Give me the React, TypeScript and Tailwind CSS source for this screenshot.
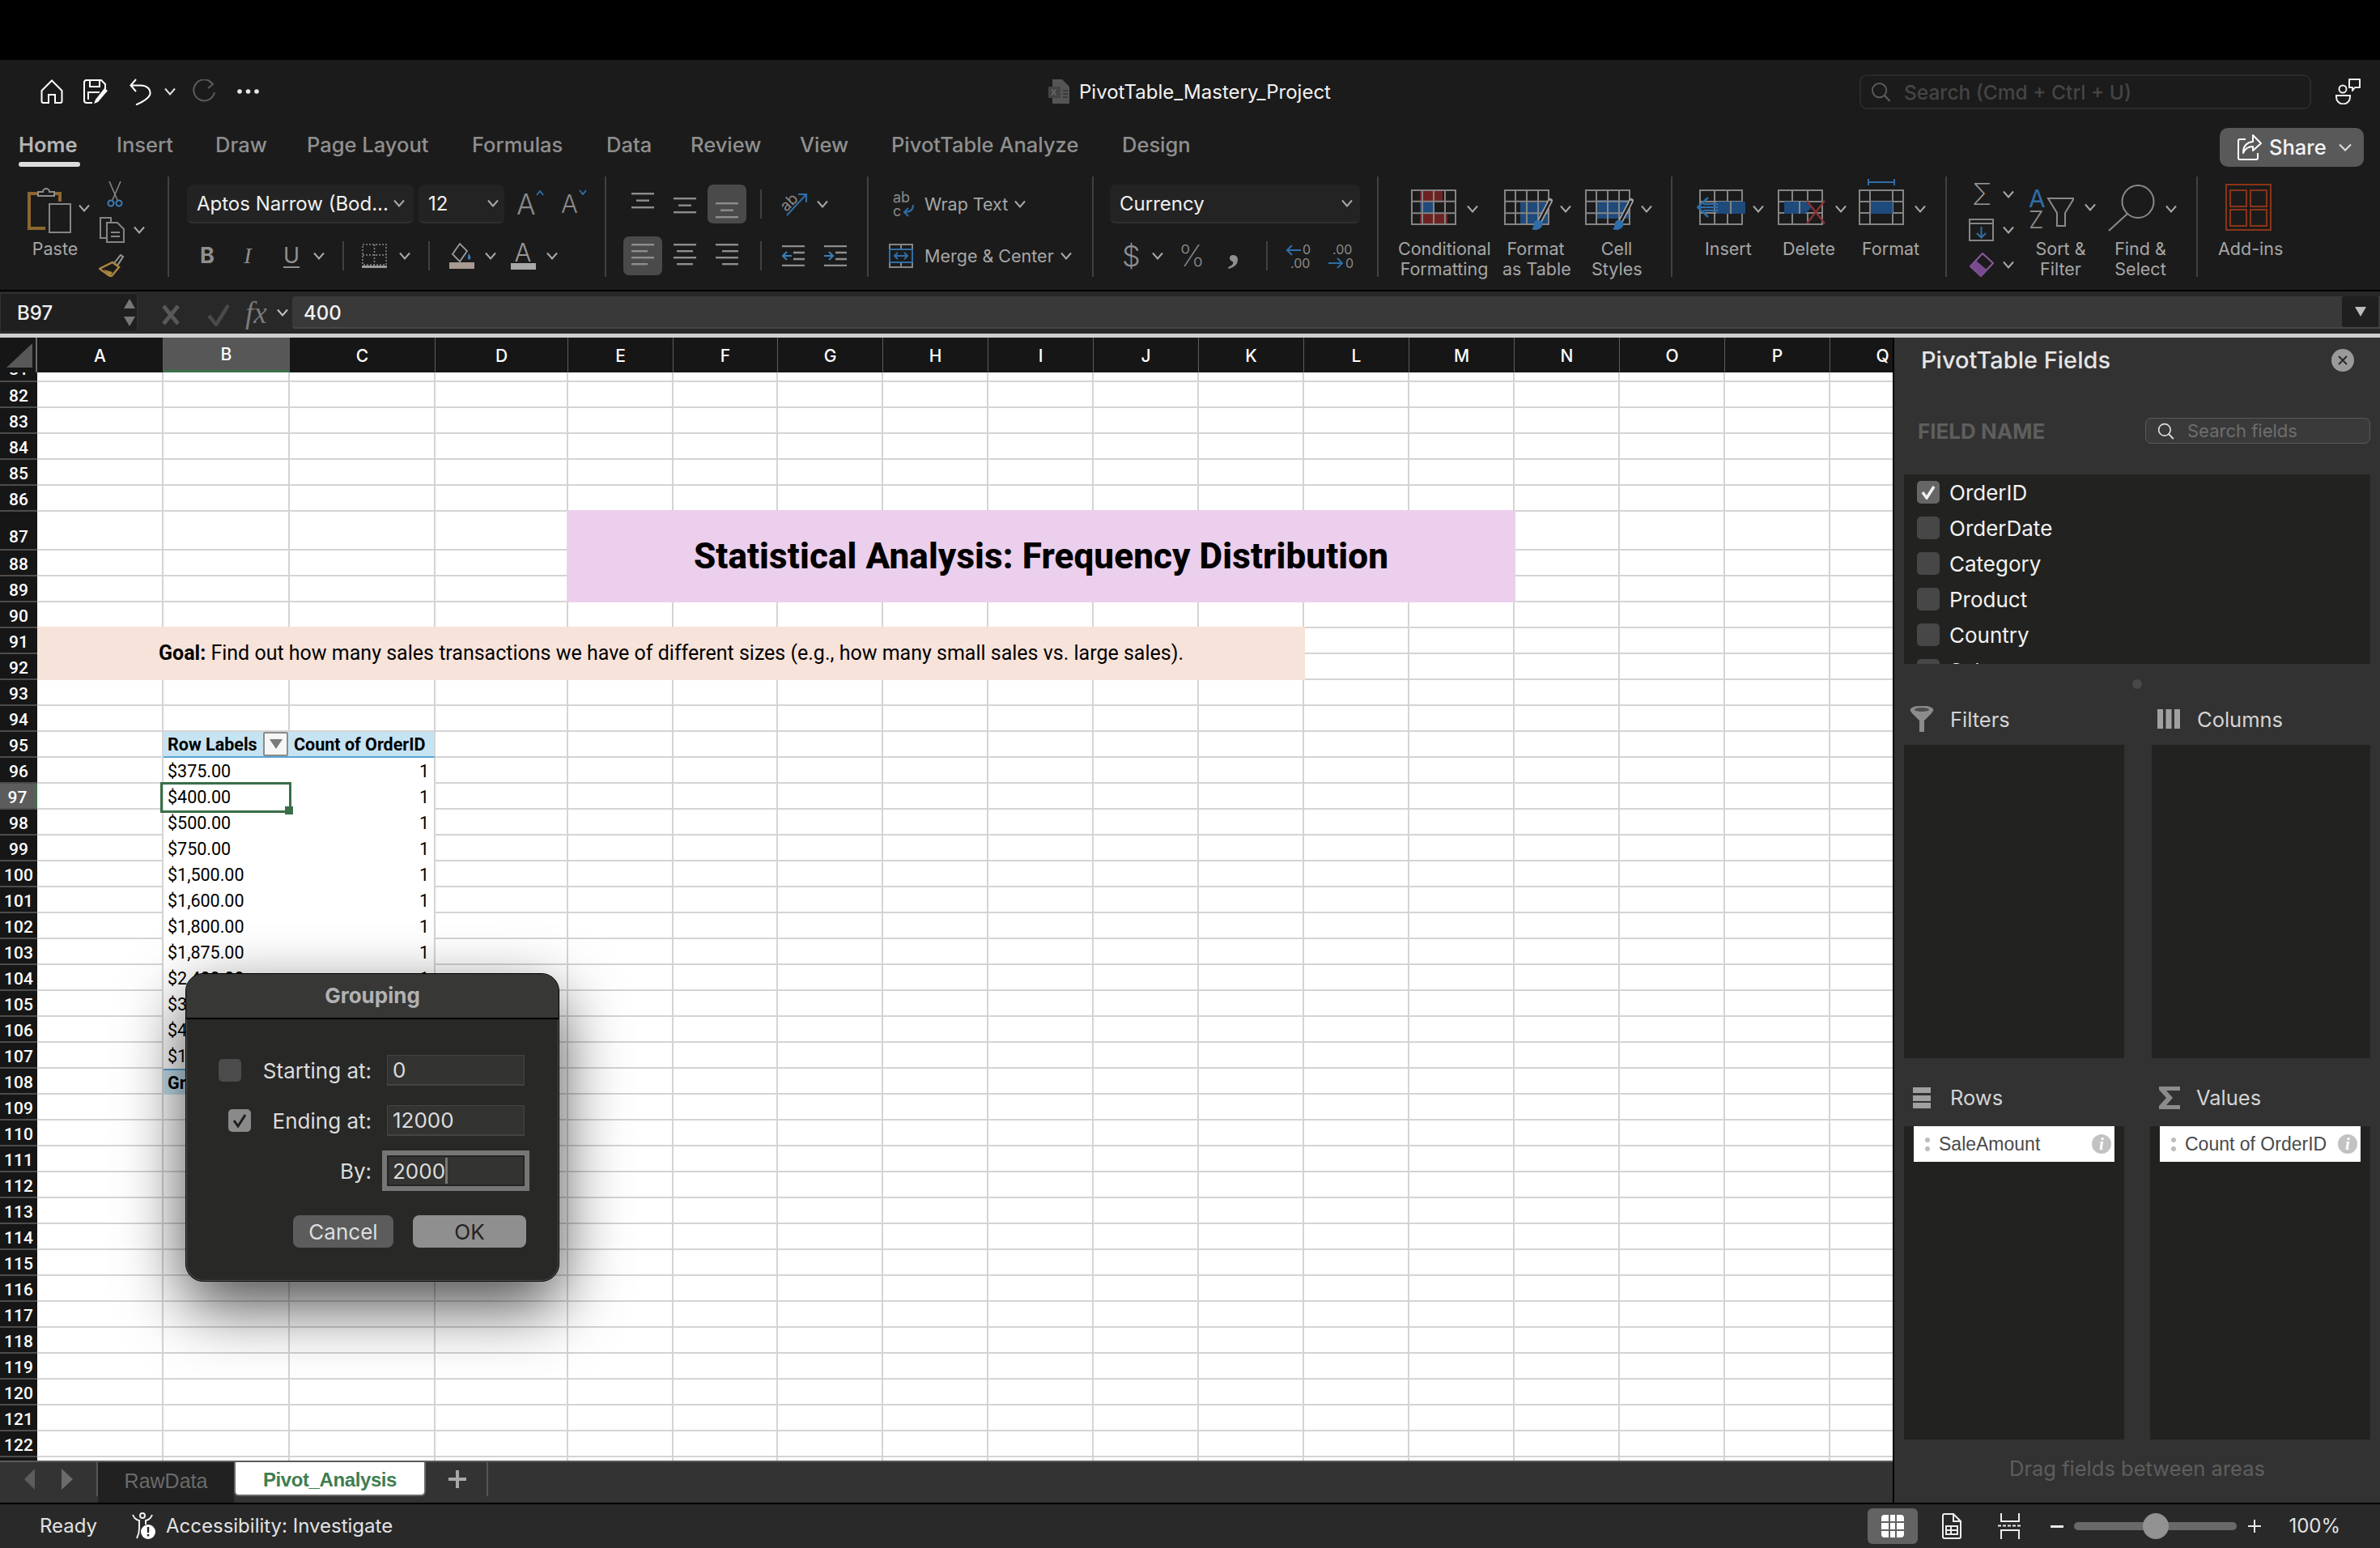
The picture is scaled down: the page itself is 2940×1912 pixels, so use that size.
import type { ReactNode } from 'react'

const columns = [
  { name: 'A', w: 'w-[156px]' }, { name: 'B', w: 'w-[156px]' }, { name: 'C', w: 'w-[180px]' },
  { name: 'D', w: 'w-[164px]' }, { name: 'E', w: 'w-[130px]' }, { name: 'F', w: 'w-[129px]' },
  { name: 'G', w: 'w-[130px]' }, { name: 'H', w: 'w-[130px]' }, { name: 'I', w: 'w-[130px]' },
  { name: 'J', w: 'w-[130px]' }, { name: 'K', w: 'w-[130px]' }, { name: 'L', w: 'w-[130px]' },
  { name: 'M', w: 'w-[130px]' }, { name: 'N', w: 'w-[130px]' }, { name: 'O', w: 'w-[130px]' },
  { name: 'P', w: 'w-[130px]' }, { name: 'Q', w: 'w-[130px]' },
]

const tabs = [
  { label: 'Home',              w: 'w-[121px]' },
  { label: 'Insert',            w: 'w-[122px]' },
  { label: 'Draw',              w: 'w-[113px]' },
  { label: 'Page Layout',       w: 'w-[204px]' },
  { label: 'Formulas',          w: 'w-[166px]' },
  { label: 'Data',              w: 'w-[104px]' },
  { label: 'Review',            w: 'w-[135px]' },
  { label: 'View',              w: 'w-[113px]' },
  { label: 'PivotTable Analyze', w: 'w-[285px]' },
  { label: 'Design',            w: 'w-[90px]' },
]

const pivotRows: Record<number, string> = {
  96: '$375.00', 97: '$400.00', 98: '$500.00', 99: '$750.00', 100: '$1,500.00', 101: '$1,600.00',
  102: '$1,800.00', 103: '$1,875.00', 104: '$2,400.00', 105: '$3,200.00', 106: '$4,500.00', 107: '$12,000.00',
}

const rowNumbers = Array.from({ length: 43 }, (_, i) => 81 + i)

function rowHeight(n: number) {
  if (n === 81) return 'items-end'
  if (n === 87) return 'items-end pb-[1px]'
  return 'items-center pt-[3px]'
}

function Chev({ className = '', color = '#a8a8a8' }: { className?: string; color?: string }) {
  return (
    <svg width="10" height="8" viewBox="0 0 10 8" className={`shrink-0 overflow-visible ${className}`}>
      <path d="M-1 0.500 5 7.500 11 0.500" fill="none" stroke={color} strokeWidth="2" />
    </svg>
  )
}

function VDiv({ className = '' }: { className?: string }) {
  return <div className={`h-[36px] w-[2px] shrink-0 bg-[#414141] ${className}`} />
}

function Magnifier({ size = 26, color = '#666' }: { size?: number; color?: string }) {
  return (
    <svg width={size} height={size} viewBox="0 0 26 26" className="shrink-0">
      <circle cx="11" cy="11" r="9" fill="none" stroke={color} strokeWidth="2" />
      <path d="M17.5 17.5 24.5 25" stroke={color} strokeWidth="2.4" />
    </svg>
  )
}

function LinesIcon({ rows, w = 28, pitch = 8.5, h }: { rows: [number, number][]; w?: number; pitch?: number; h?: number }) {
  return (
    <svg width={w} height={h ?? rows.length * pitch} viewBox={`0 0 ${w} ${h ?? rows.length * pitch}`} className="shrink-0">
      {rows.map(([x, len], i) => (
        <rect key={i} x={x} y={i * pitch + 1} width={len} height="2.4" fill="#8d8d8d" />
      ))}
    </svg>
  )
}

function Grid56({ children, overlay, w = 56, h = 44 }: { children?: ReactNode; overlay?: ReactNode; w?: number; h?: number }) {
  const cols = [w / 4, w / 2, (w * 3) / 4]
  const rows = [h / 3, (h * 2) / 3]
  return (
    <svg width={w + 12} height={h + 14} viewBox={`0 0 ${w + 12} ${h + 14}`} className="shrink-0 overflow-visible">
      {children}
      <rect x="1" y="1" width={w - 2} height={h - 2} fill="none" stroke="#858585" strokeWidth="2" />
      {cols.map(x => <path key={x} d={`M${x} 1V${h - 1}`} stroke="#858585" strokeWidth="2" />)}
      {rows.map(y => <path key={y} d={`M1 ${y}H${w - 1}`} stroke="#858585" strokeWidth="2" />)}
      {overlay}
    </svg>
  )
}

function Brush({ x, y }: { x: number; y: number }) {
  return (
    <g transform={`translate(${x} ${y})`}>
      <path d="M22 0 8 27" stroke="#a0a0a0" strokeWidth="6" strokeLinecap="round" />
      <path d="M22 0 8 27" stroke="#1b1b1b" strokeWidth="2.6" />
      <path d="M3 25c5-3 11 0 9 6-2 5-9 6-13 4 3-2 2-6 4-10z" fill="#2f6ea8" />
    </g>
  )
}

function Command({ className, width, iconClass, icon, chevClass, lines }: {
  className: string; width: string; iconClass: string; icon: ReactNode; chevClass: string; lines: string[]
}) {
  return (
    <div className={`flex shrink-0 flex-col pt-[16px] ${className} ${width}`}>
      <div className={`flex h-[61px] shrink-0 items-start ${iconClass}`}>
        <div className="shrink-0">{icon}</div>
        <Chev className={chevClass} />
      </div>
      {lines.map(line => (
        <div key={line} className="shrink-0 whitespace-nowrap text-center text-[21.5px] leading-[25px] text-[#a6a6a6]">{line}</div>
      ))}
    </div>
  )
}

function RibbonGroup({ width, className = '', children }: { width: string; className?: string; children: ReactNode }) {
  return <div className={`flex h-[124px] shrink-0 border-r-2 border-[#414141] ${width} ${className}`}>{children}</div>
}

function ToolRow({ children, className = '' }: { children: ReactNode; className?: string }) {
  return <div className={`flex h-[48px] shrink-0 items-center ${className}`}>{children}</div>
}

function Combo({ text, className, chevClass }: { text: string; className: string; chevClass: string }) {
  return (
    <div className={`flex h-[48px] shrink-0 items-center rounded-[7px] border-b-2 border-[#303030] bg-[#232323] pl-[12px] ${className}`}>
      <span className="whitespace-nowrap pt-[2px] text-[24px] text-[#f0f0f0]">{text}</span>
      <Chev className={chevClass} />
    </div>
  )
}

function QuickAccess() {
  return (
    <div className="flex h-[78px] items-center">
      <svg width="28" height="30" viewBox="0 0 28 30" className="ml-[50px] shrink-0">
        <path d="M14 1.5 26.5 14v13a2 2 0 0 1-2 2H18V19h-8v10H3.500a2 2 0 0 1-2-2V14z" fill="none" stroke="#fff" strokeWidth="2" />
      </svg>
      <svg width="31" height="30" viewBox="0 0 31 30" className="ml-[25px] shrink-0">
        <path d="M11 29H4a3 3 0 0 1-3-3V4a3 3 0 0 1 3-3h18l5 5v6" fill="none" stroke="#fff" strokeWidth="2" />
        <path d="M8 1v8h12V1M6 25v-9h14" fill="none" stroke="#fff" strokeWidth="2" />
        <path d="M26 11 15 25l-2 5 5-2 12-14z" fill="#fff" />
      </svg>
      <svg width="27" height="33" viewBox="0 0 27 33" className="ml-[26px] shrink-0">
        <path d="M8 1 1.500 8.500 8 16M1.500 8.500H13c10 0 14 6 12 12-2 4-8 8-17 12" fill="none" stroke="#fff" strokeWidth="2" />
      </svg>
      <Chev className="ml-[18px]" color="#e0e0e0" />
      <svg width="29" height="30" viewBox="0 0 29 30" className="ml-[22px] shrink-0">
        <path d="M26 6a13 13 0 1 0 2 10M20 1l6 5-6 5" fill="none" stroke="#5a5a5a" strokeWidth="2" />
      </svg>
      <svg width="27" height="6" viewBox="0 0 27 6" className="ml-[27px] shrink-0">
        <circle cx="3" cy="3" r="2.800" fill="#e8e8e8" /><circle cx="13.500" cy="3" r="2.800" fill="#e8e8e8" /><circle cx="24" cy="3" r="2.800" fill="#e8e8e8" />
      </svg>
      <svg width="26" height="30" viewBox="0 0 26 30" className="ml-[975px] shrink-0">
        <path d="M5 0h12l9 9v21H5z" fill="#555" />
        <rect x="0" y="9" width="15" height="14" rx="1" fill="#444" />
        <text x="3" y="20" fontSize="11" fill="#777">X</text>
        <path d="M18 14h6M18 18h6M18 22h6" stroke="#333" strokeWidth="1.500" />
      </svg>
      <span className="ml-[12px] w-[312px] whitespace-nowrap pt-[2px] text-[24px] text-[#f2f2f2]">PivotTable_Mastery_Project</span>
      <div className="ml-[652px] flex h-[43px] w-[558px] shrink-0 items-center rounded-[9px] border-2 border-[#2a2a2a] pl-[12px]">
        <Magnifier size={25} color="#5a5a5a" />
        <span className="ml-[16px] whitespace-nowrap pt-[2px] text-[24.500px] font-medium text-[#454545]">Search (Cmd + Ctrl + U)</span>
      </div>
      <svg width="32" height="32" viewBox="0 0 32 32" className="ml-[30px] shrink-0">
        <path d="M17 1h13v10h-6l-3 4v-4h-4z" fill="none" stroke="#eee" strokeWidth="2" strokeLinejoin="round" />
        <circle cx="9" cy="13" r="4.500" fill="none" stroke="#eee" strokeWidth="2" />
        <path d="M1 21h17v2a8.500 8.500 0 0 1-17 0z" fill="none" stroke="#eee" strokeWidth="2" />
      </svg>
    </div>
  )
}

function RibbonTabs() {
  return (
    <div className="flex h-[60px] items-start pl-[23px]">
      {tabs.map(tab => (
        <div key={tab.label} className={`flex shrink-0 flex-col pt-[12px] ${tab.w}`}>
          <span className={`whitespace-nowrap text-[25.500px] leading-[30px] ${tab.label === 'Home' ? 'font-semibold text-[#b4b4b4]' : 'font-medium text-[#8f8f8f]'}`}>{tab.label}</span>
          {tab.label === 'Home' && <div className="mt-[6px] h-[6px] w-[76px] rounded-full bg-[#dcdcdc]" />}
        </div>
      ))}
      <div className="ml-auto mr-[20px] mt-[6px] flex h-[48px] w-[178px] items-center rounded-[10px] bg-[#595959] pl-[22px]">
        <svg width="30" height="32" viewBox="0 0 30 32" className="shrink-0">
          <path d="M10 6H3a2 2 0 0 0-2 2v21a2 2 0 0 0 2 2h20a2 2 0 0 0 2-2v-6" fill="none" stroke="#fff" strokeWidth="2" />
          <path d="M19 1l10 10-10 9v-5c-6 0-10 3-12 8 0-8 4-13 12-14z" fill="none" stroke="#fff" strokeWidth="2" strokeLinejoin="round" />
        </svg>
        <span className="ml-[9px] text-[25.500px] font-medium text-[#f4f4f4]">Share</span>
        <svg width="16" height="10" viewBox="0 0 16 10" className="ml-[15px] shrink-0">
          <path d="M1 1.500 8 8.500 15 1.500" fill="none" stroke="#e0e0e0" strokeWidth="2" />
        </svg>
      </div>
    </div>
  )
}

function Ribbon() {
  return (
    <div className="flex h-[146px] pt-[6px]">
      <RibbonGroup width="w-[209px]">
        <div className="w-[122px] shrink-0 pt-[10px]">
          <div className="ml-[34px] flex items-center">
            <svg width="54" height="60" viewBox="0 0 54 60" className="shrink-0">
              <path d="M22 54H2V11h38v10" fill="none" stroke="#8c672f" strokeWidth="4" />
              <path d="M13 14V9h6a4 4 0 0 1 8 0h6v5z" fill="#1b1b1b" stroke="#8d8d8d" strokeWidth="2" />
              <rect x="27" y="24" width="26" height="35" fill="#1b1b1b" stroke="#858585" strokeWidth="2" />
            </svg>
            <Chev className="ml-[11px] mt-[-2px]" />
          </div>
          <div className="mt-[6px] w-[136px] text-center text-[21.500px] leading-[26px] text-[#a6a6a6]">Paste</div>
        </div>
        <div className="flex flex-col pt-[6px]">
          <svg width="20" height="32" viewBox="0 0 20 32" className="ml-[10px] shrink-0">
            <path d="M3 0 13 23M17 0 7 23" stroke="#8a8a8a" strokeWidth="1.500" />
            <circle cx="5" cy="27" r="3.500" fill="none" stroke="#3a7fb8" strokeWidth="2" />
            <circle cx="15" cy="27" r="3.500" fill="none" stroke="#3a7fb8" strokeWidth="2" />
          </svg>
          <div className="mt-[12px] flex items-center">
            <svg width="32" height="32" viewBox="0 0 32 32" className="shrink-0">
              <path d="M12 26H2V1h13v6" fill="none" stroke="#858585" strokeWidth="2" />
              <path d="M10 7h13l8 8v16H10z" fill="#1b1b1b" stroke="#858585" strokeWidth="2" />
              <path d="M15 19h11M15 24h11" stroke="#858585" strokeWidth="2" />
            </svg>
            <Chev className="ml-[13px]" />
          </div>
          <svg width="32" height="30" viewBox="0 0 32 30" className="mt-[12px] shrink-0">
            <path d="M19 13 27 3l3 2-7 11z" fill="none" stroke="#9a9a9a" strokeWidth="2" />
            <path d="M17 12 25 18 15 30 1 20z" fill="none" stroke="#a9843f" strokeWidth="2.500" />
            <path d="M6 21 17 24 14 30z" fill="#a9843f" />
          </svg>
        </div>
      </RibbonGroup>

      <RibbonGroup width="w-[540px]" className="flex-col gap-[16px] pt-[10px]">
        <ToolRow>
          <Combo text="Aptos Narrow (Bod..." className="ml-[22px] w-[280px]" chevClass="ml-[8px]" />
          <Combo text="12" className="ml-[6px] w-[106px]" chevClass="ml-[51px]" />
          <div className="relative ml-[15px] h-[34px] w-[30px] shrink-0 text-[35px] leading-[34px] font-light text-[#8a8a8a]">A
            <svg width="10" height="7" viewBox="0 0 10 7" className="absolute right-[-4px] top-[0px]"><path d="M1 6 5 1l4 5" fill="none" stroke="#2f6ea8" strokeWidth="2" /></svg>
          </div>
          <div className="relative ml-[25px] h-[30px] w-[27px] shrink-0 text-[31px] leading-[30px] font-light text-[#8a8a8a]">A
            <svg width="10" height="7" viewBox="0 0 10 7" className="absolute right-[-5px] top-[-3px]"><path d="M1 1l4 5 4-5" fill="none" stroke="#2f6ea8" strokeWidth="2" /></svg>
          </div>
        </ToolRow>
        <ToolRow>
          <span className="ml-[38px] w-[15px] text-center text-[27px] font-bold text-[#8f8f8f]">B</span>
          <span className="ml-[38px] w-[12px] text-center font-['Liberation_Serif',serif] text-[28px] italic text-[#8f8f8f]">I</span>
          <span className="ml-[38px] w-[15px] text-center text-[27px] text-[#8f8f8f] underline underline-offset-4">U</span>
          <Chev className="ml-[24px]" />
          <VDiv className="ml-[24px]" />
          <svg width="31" height="30" viewBox="0 0 31 30" className="ml-[22px] shrink-0">
            <rect x="1" y="1" width="29" height="25" fill="none" stroke="#8a8a8a" strokeWidth="1.500" strokeDasharray="2 2" />
            <path d="M15.500 1v25M1 14h29" stroke="#8a8a8a" strokeWidth="1.500" strokeDasharray="2 2" />
            <rect x="0" y="27" width="31" height="3" fill="#9a9a9a" />
          </svg>
          <Chev className="ml-[17px]" />
          <VDiv className="ml-[24px]" />
          <svg width="31" height="32" viewBox="0 0 31 32" className="ml-[24px] shrink-0">
            <path d="M13 1 4 14l9 9 9-13z" fill="none" stroke="#9a9a9a" strokeWidth="1.800" />
            <path d="M24 13c2 3 3 5 2 7-1 1-3 1-3-1 0-2 0-4 1-6z" fill="#3a7fb8" />
            <rect x="0" y="24" width="31" height="8" fill="#a89a90" />
          </svg>
          <Chev className="ml-[15px]" />
          <div className="ml-[19px] flex w-[32px] shrink-0 flex-col items-center">
            <span className="text-[31px] leading-[24px] font-light text-[#9a9a9a]">A</span>
            <div className="mt-[1px] h-[8px] w-[31px] bg-[#a8a8a8]" />
          </div>
          <Chev className="ml-[15px]" />
        </ToolRow>
      </RibbonGroup>

      <RibbonGroup width="w-[324px]" className="flex-col gap-[16px] pt-[10px]">
        <ToolRow>
          <div className="ml-[31px] h-[48px] w-[28px] shrink-0 pt-[9px]"><LinesIcon rows={[[0, 28], [6, 16], [0, 28]]} /></div>
          <div className="ml-[24px] h-[48px] w-[28px] shrink-0 pt-[15px]"><LinesIcon rows={[[0, 28], [6, 16], [0, 28]]} /></div>
          <div className="ml-[14px] flex h-[48px] w-[48px] shrink-0 justify-center rounded-[7px] bg-[#4a4a4a] pt-[21px]"><LinesIcon rows={[[0, 28], [6, 16], [0, 28]]} /></div>
          <VDiv className="ml-[17px]" />
          <svg width="34" height="30" viewBox="0 0 34 30" className="ml-[23px] shrink-0">
            <text x="0" y="20" fontSize="19" fill="#8a8a8a" transform="rotate(-45 10 14)">ab</text>
            <path d="M8 29 31 4M22 3h10v10" fill="none" stroke="#2f6ea8" strokeWidth="2" />
          </svg>
          <Chev className="ml-[13px]" />
        </ToolRow>
        <ToolRow>
          <div className="ml-[21px] flex h-[48px] w-[48px] shrink-0 items-center justify-center rounded-[7px] bg-[#4a4a4a]"><LinesIcon rows={[[0, 28], [0, 20], [0, 28], [0, 20]]} pitch={8} /></div>
          <div className="ml-[14px] w-[28px] shrink-0"><LinesIcon rows={[[0, 28], [4, 20], [0, 28], [4, 20]]} pitch={8} /></div>
          <div className="ml-[24px] w-[28px] shrink-0"><LinesIcon rows={[[0, 28], [8, 20], [0, 28], [8, 20]]} pitch={8} /></div>
          <VDiv className="ml-[27px]" />
          <svg width="28" height="26" viewBox="0 0 28 26" className="ml-[25px] shrink-0">
            <path d="M0 1h28M14 9h14M14 17h14M0 25h28" stroke="#8d8d8d" strokeWidth="2.400" />
            <path d="M12 13H1M6 8l-5 5 5 5" fill="none" stroke="#3a7fb8" strokeWidth="2" />
          </svg>
          <svg width="28" height="26" viewBox="0 0 28 26" className="ml-[24px] shrink-0">
            <path d="M0 1h28M14 9h14M14 17h14M0 25h28" stroke="#8d8d8d" strokeWidth="2.400" />
            <path d="M0 13h11M6 8l5 5-5 5" fill="none" stroke="#3a7fb8" strokeWidth="2" />
          </svg>
        </ToolRow>
      </RibbonGroup>

      <RibbonGroup width="w-[278px]" className="flex-col gap-[16px] pt-[10px]">
        <ToolRow>
          <svg width="27" height="32" viewBox="0 0 27 32" className="ml-[30px] shrink-0">
            <text x="0" y="14" fontSize="18" fill="#8a8a8a">ab</text>
            <text x="0" y="31" fontSize="18" fill="#8a8a8a">c</text>
            <path d="M25 17c0 6-3 9-10 9M19 21l-5 5 5 5" fill="none" stroke="#2f6ea8" strokeWidth="2" />
          </svg>
          <span className="ml-[12px] w-[101px] whitespace-nowrap text-[21.500px] text-[#a6a6a6]">Wrap Text</span>
          <Chev className="ml-[12px]" />
        </ToolRow>
        <ToolRow>
          <svg width="30" height="30" viewBox="0 0 30 30" className="ml-[25px] shrink-0">
            <path d="M1 1h28v28H1zM1 7h28M1 23h28M15 1v6M15 23v6" fill="none" stroke="#858585" strokeWidth="2" />
            <path d="M1 7v16M29 7v16M1 7h28M1 23h28" fill="none" stroke="#2f6ea8" strokeWidth="2" />
            <path d="M7 15h16M11 11l-4 4 4 4M19 11l4 4-4 4" fill="none" stroke="#2f6ea8" strokeWidth="2" />
          </svg>
          <span className="ml-[14px] w-[158px] whitespace-nowrap text-[21.500px] text-[#a6a6a6]">Merge &amp; Center</span>
          <Chev className="ml-[12px]" />
        </ToolRow>
      </RibbonGroup>

      <RibbonGroup width="w-[352px]" className="flex-col gap-[16px] pt-[10px]">
        <ToolRow>
          <Combo text="Currency" className="ml-[20px] w-[309px]" chevClass="ml-[171px]" />
        </ToolRow>
        <ToolRow>
          <span className="ml-[35px] w-[16px] text-center text-[36px] font-light leading-[44px] text-[#8f8f8f]">$</span>
          <Chev className="ml-[23px]" />
          <span className="ml-[21px] w-[30px] text-center text-[36px] font-extralight leading-[44px] text-[#8f8f8f]">%</span>
          <span className="ml-[30px] mt-[-24px] w-[16px] text-center font-['Liberation_Serif',serif] text-[58px] font-bold leading-[24px] text-[#8f8f8f]">,</span>
          <VDiv className="ml-[32px]" />
          <svg width="31" height="32" viewBox="0 0 31 32" className="ml-[23px] shrink-0">
            <text x="20" y="14" fontSize="16" fill="#8a8a8a">0</text>
            <text x="5" y="31" fontSize="16" fill="#8a8a8a">.00</text>
            <path d="M18 9H2M7 3 1 9l6 6" fill="none" stroke="#2f6ea8" strokeWidth="2" />
          </svg>
          <svg width="32" height="32" viewBox="0 0 32 32" className="ml-[20px] shrink-0">
            <text x="6" y="14" fontSize="16" fill="#8a8a8a">.00</text>
            <text x="22" y="31" fontSize="16" fill="#8a8a8a">0</text>
            <path d="M1 25h16M12 19l6 6-6 6" fill="none" stroke="#2f6ea8" strokeWidth="2" />
          </svg>
        </ToolRow>
      </RibbonGroup>

      <RibbonGroup width="w-[363px]">
        <Command className="ml-[24px]" width="w-[114px]" iconClass="ml-[16px]" chevClass="ml-[3px] mt-[20px]" lines={['Conditional', 'Formatting']} icon={
          <Grid56>
            <rect x="11" y="1" width="28" height="15" fill="#6d2222" />
            <rect x="11" y="16" width="18" height="14" fill="#1f4a7c" />
            <rect x="11" y="30" width="34" height="14" fill="#6d2222" />
          </Grid56>
        } />
        <Command className="ml-[15px]" width="w-[82px]" iconClass="ml-[2px]" chevClass="ml-[3px] mt-[20px]" lines={['Format', 'as Table']} icon={
          <Grid56 overlay={<Brush x={35} y={14} />}>
            <rect x="20" y="16" width="36" height="28" fill="#1f4a7c" />
          </Grid56>
        } />
        <Command className="ml-[28px]" width="w-[62px]" iconClass="ml-[-8px]" chevClass="ml-[3px] mt-[20px]" lines={['Cell', 'Styles']} icon={
          <Grid56 overlay={<Brush x={35} y={14} />}>
            <rect x="13" y="13" width="43" height="23" fill="#1f4a7c" />
          </Grid56>
        } />
      </RibbonGroup>

      <RibbonGroup width="w-[339px]">
        <Command className="ml-[40px]" width="w-[57px]" iconClass="ml-[-10px]" chevClass="ml-[-1px] mt-[20px]" lines={['Insert']} icon={
          <svg width="72" height="44" viewBox="0 0 72 44" className="shrink-0">
            <path d="M4 1h52v42H4zM4 15h52M4 29h52M22 1v42M38 1v42" fill="none" stroke="#858585" strokeWidth="2" />
            <rect x="24" y="15" width="36" height="15" fill="#1f4a7c" /><path d="M42 15v15" stroke="#858585" strokeWidth="2" />
            <path d="M26 22H2M14 10 1 22l13 12M26 18H8M26 26H8" fill="none" stroke="#2f6ea8" strokeWidth="2.500" />
          </svg>
        } />
        <Command className="ml-[39px]" width="w-[64px]" iconClass="ml-[-6px]" chevClass="ml-[1px] mt-[20px]" lines={['Delete']} icon={
          <svg width="72" height="44" viewBox="0 0 72 44" className="shrink-0">
            <path d="M1 1h54v42H1zM1 15h54M1 29h54M18 1v14M18 29v14M37 1v14M37 29v14" fill="none" stroke="#858585" strokeWidth="2" />
            <path d="M8 15h26l8 7-8 8H8z" fill="#1f4a7c" /><path d="M27 15v15" stroke="#858585" strokeWidth="2" />
            <path d="M36 14 58 42M58 14 36 42" stroke="#8c3232" strokeWidth="2.400" />
          </svg>
        } />
        <Command className="ml-[34px]" width="w-[70px]" iconClass="ml-[-4px]" chevClass="ml-[15px] mt-[20px]" lines={['Format']} icon={
          <svg width="56" height="44" viewBox="0 0 56 44" className="shrink-0 overflow-visible">
            <path d="M12 -9h32M12 -13v8M44 -13v8" stroke="#2f6ea8" strokeWidth="2" />
            <path d="M1 1h54v42H1zM1 15h54M1 29h54M14 1v42M42 1v42" fill="none" stroke="#858585" strokeWidth="2" />
            <rect x="15" y="15" width="27" height="15" fill="#1f4a7c" />
          </svg>
        } />
      </RibbonGroup>

      <RibbonGroup width="w-[310px]">
        <div className="ml-[27px] flex w-[54px] shrink-0 flex-col">
          <div className="mt-[8px] flex h-[28px] items-center">
            <span className="ml-[4px] w-[24px] text-center text-[36px] font-extralight leading-[28px] text-[#9a9a9a]">Σ</span>
            <Chev className="ml-[16px]" />
          </div>
          <div className="mt-[16px] flex h-[28px] items-center">
            <svg width="31" height="28" viewBox="0 0 31 28" className="shrink-0">
              <path d="M1 1h29v26H1zM1 6h29" fill="none" stroke="#858585" strokeWidth="2" />
              <path d="M15.500 10v13M10 18l5.500 5.500L21 18" fill="none" stroke="#2f6ea8" strokeWidth="2" />
            </svg>
            <Chev className="ml-[13px]" />
          </div>
          <div className="mt-[14px] flex h-[30px] items-center">
            <svg width="31" height="30" viewBox="0 0 31 30" className="shrink-0">
              <path d="M17 1 30 13 15 29 2 17z" fill="none" stroke="#8a5aa0" strokeWidth="2" />
              <path d="M9 10 22 21 15 29 2 17z" fill="#7a4a90" />
            </svg>
            <Chev className="ml-[13px]" />
          </div>
        </div>
        <Command className="ml-[28px]" width="w-[63px]" iconClass="ml-[-8px] mt-[-4px] mb-[4px]" chevClass="ml-[15px] mt-[22px]" lines={['Sort &', 'Filter']} icon={
          <svg width="56" height="52" viewBox="0 0 56 52" className="shrink-0">
            <text x="0" y="26" fontSize="30" fill="#2f6ea8">A</text>
            <text x="0" y="52" fontSize="30" fontWeight="300" fill="#8a8a8a">Z</text>
            <path d="M24 15h32L45 33v16h-10V33z" fill="none" stroke="#8a8a8a" strokeWidth="2" />
          </svg>
        } />
        <Command className="ml-[35px]" width="w-[64px]" iconClass="ml-[-8px] mt-[-6px] mb-[6px]" chevClass="ml-[15px] mt-[26px]" lines={['Find &', 'Select']} icon={
          <svg width="58" height="58" viewBox="0 0 58 58" className="shrink-0">
            <ellipse cx="37" cy="21" rx="19.500" ry="20" fill="none" stroke="#8a8a8a" strokeWidth="2" />
            <path d="M24 37 1 58" stroke="#8a8a8a" strokeWidth="2" transform="translate(0 -1)" />
          </svg>
        } />
      </RibbonGroup>

      <div className="flex flex-col">
        <div className="ml-[25px] flex w-[78px] flex-col pt-[9px]">
          <svg width="57" height="58" viewBox="0 0 57 58" className="ml-[9px] shrink-0">
            <rect x="1" y="1" width="55" height="56" fill="none" stroke="#8a3418" strokeWidth="2" />
            <rect x="6" y="8" width="20" height="20" fill="none" stroke="#8a3418" strokeWidth="2" />
            <rect x="31" y="8" width="20" height="20" fill="none" stroke="#8a3418" strokeWidth="2" />
            <rect x="6" y="32" width="20" height="20" fill="none" stroke="#8a3418" strokeWidth="2" />
            <rect x="31" y="32" width="20" height="20" fill="none" stroke="#8a3418" strokeWidth="2" />
          </svg>
          <div className="mt-[10px] whitespace-nowrap text-center text-[21.500px] leading-[25px] text-[#a6a6a6]">Add-ins</div>
        </div>
      </div>
    </div>
  )
}

function FormulaBar() {
  return (
    <div className="flex h-[52px] items-center bg-[#282828]">
      <div className="flex h-[48px] w-[170px] shrink-0 items-center border border-[#303030] bg-[#1f1f1f] pl-[20px]">
        <span className="w-[44px] pt-[2px] text-[24px] font-medium text-[#f0f0f0]">B97</span>
        <div className="ml-[88px] flex flex-col gap-[10px]">
          <svg width="14" height="12" viewBox="0 0 14 12"><path d="M7 0 14 12H0z" fill="#777" /></svg>
          <svg width="14" height="12" viewBox="0 0 14 12"><path d="M7 12 14 0H0z" fill="#777" /></svg>
        </div>
      </div>
      <svg width="22" height="26" viewBox="0 0 22 26" className="ml-[30px] mt-[6px] shrink-0">
        <path d="M2 2 20 24M20 2 2 24" stroke="#585858" strokeWidth="5" />
      </svg>
      <svg width="28" height="28" viewBox="0 0 28 28" className="ml-[34px] mt-[6px] shrink-0">
        <path d="M2 15 11 26 26 2" fill="none" stroke="#4a4a4a" strokeWidth="4.500" />
      </svg>
      <span className="ml-[19px] w-[32px] shrink-0 font-['Liberation_Serif',serif] text-[37px] italic leading-none text-[#7a7a7a]">fx</span>
      <Chev className="ml-[9px]" color="#c0c0c0" />
      <div className="ml-[7px] flex h-[40px] flex-1 items-center justify-between rounded-l-[4px] border-b-2 border-[#454545] bg-[#393939] pl-[14px]">
        <span className="pt-[3px] text-[24px] font-medium text-[#f2f2f2]">400</span>
        <div className="mr-[2px] flex h-[38px] w-[45px] items-center justify-center rounded-[3px] bg-[#1f1f1f]">
          <svg width="14" height="12" viewBox="0 0 14 12"><path d="M7 12 14 0H0z" fill="#bdbdbd" /></svg>
        </div>
      </div>
    </div>
  )
}

function Sheet() {
  return (
    <div className="relative h-[1387px] overflow-hidden bg-white font-['Roboto',sans-serif]">
      <div className="flex h-[43px] bg-[#161616]">
        <div className="flex w-[46px] shrink-0 items-center justify-center border-r-2 border-[#6a6a6a] pl-[4px]">
          <svg width="32" height="30" viewBox="0 0 32 30"><path d="M32 0V30H0z" fill="#585858" /></svg>
        </div>
        {columns.map(col => (
          <div key={col.name} className={`flex shrink-0 items-center justify-center border-r border-[#5c5c5c] pt-[2px] font-['Inter',sans-serif] text-[21px] font-medium text-white ${col.w} ${col.name === 'B' ? 'border-b-[3px] border-b-[#3a7049] bg-[#575757]' : ''}`}>
            {col.name}
          </div>
        ))}
      </div>

      {rowNumbers.map(n => {
        const label = n === 95 ? 'Row Labels' : n === 108 ? 'Grand Total' : pivotRows[n]
        const pivot = n >= 95 && n <= 108
        const banded = n === 95 || n === 108
        return (
          <div key={n} className={`flex ${n === 81 ? 'h-[12px]' : n === 87 ? 'h-[48px]' : 'h-[32px]'}`}>
            <div className={`flex w-[46px] shrink-0 justify-center overflow-hidden border-b-2 border-[#4c4c4c] text-[21px] font-medium leading-[28px] text-white ${rowHeight(n)} ${n === 97 ? 'border-r-[3px] border-r-[#3a7049] bg-[#5c5c5c]' : 'bg-[#161616]'}`}>
              {n}
            </div>
            {columns.map(col => {
              if (pivot && col.name === 'B') {
                return (
                  <div key={col.name} className={`relative flex shrink-0 items-center justify-between pl-[5px] pr-[2px] text-[21.500px] text-black ${col.w} ${banded ? 'bg-[#c6e3f2] font-bold' : 'bg-white'} ${n === 95 ? 'border-b-2 border-[#5aa5d6]' : ''} ${n === 108 ? 'border-t-2 border-[#5aa5d6]' : ''}`}>
                    <span className="whitespace-nowrap pt-[2px]">{label}</span>
                    {n === 95 && (
                      <div className="flex h-[30px] w-[31px] shrink-0 items-center justify-center rounded-[2px] border-2 border-[#8b8b8b] bg-[#f6f6f6]">
                        <svg width="16" height="12" viewBox="0 0 16 12"><path d="M8 12 16 0H0z" fill="#7a7a7a" /></svg>
                      </div>
                    )}
                    {n === 97 && (
                      <>
                        <div className="absolute bottom-[-4px] left-[-4px] right-[-2px] top-[-2px] z-10 border-[3px] border-[#3a6e48]" />
                        <div className="absolute bottom-[-6px] right-[-4px] z-10 h-[10px] w-[10px] bg-[#3a6e48]" />
                      </>
                    )}
                  </div>
                )
              }
              if (pivot && col.name === 'C') {
                return (
                  <div key={col.name} className={`flex shrink-0 items-center border-r-2 border-[#d4d4d4] pt-[2px] text-[21.500px] text-black ${col.w} ${banded ? 'bg-[#c6e3f2] font-bold' : 'bg-white justify-end pr-[6px]'} ${n === 95 ? 'border-b-2 border-b-[#5aa5d6] pl-[5px]' : ''} ${n === 108 ? 'border-t-2 border-t-[#5aa5d6] justify-end pr-[6px]' : ''}`}>
                    {n === 95 ? <span className="whitespace-nowrap">Count of OrderID</span> : n === 108 ? '12' : '1'}
                  </div>
                )
              }
              return <div key={col.name} className={`shrink-0 border-b-2 border-r-2 border-[#d4d4d4] ${col.w}`} />
            })}
          </div>
        )
      })}

      <div className="absolute left-[700px] top-[213px] flex h-[114px] w-[1172px] items-center justify-center bg-[#ebcfec]">
        <span className="whitespace-nowrap text-[44px] font-extrabold tracking-[0.1px] text-black">Statistical Analysis: Frequency Distribution</span>
      </div>
      <div className="absolute left-[46px] top-[357px] flex h-[66px] w-[1566px] items-center bg-[#f7e3da] pl-[150px]">
        <span className="whitespace-nowrap text-[25px] text-black"><b>Goal:</b> Find out how many sales transactions we have of different sizes (e.g., how many small sales vs. large sales).</span>
      </div>
    </div>
  )
}

function SheetTabs() {
  return (
    <div className="flex h-[52px] border-t-2 border-[#5a5a5a] bg-[#333]">
      <div className="flex h-[42px] w-[121px] shrink-0 items-center border-r-2 border-[#555] pl-[30px]">
        <svg width="13" height="26" viewBox="0 0 13 26"><path d="M13 0V26L0 13z" fill="#5c5c5c" /></svg>
        <svg width="14" height="26" viewBox="0 0 14 26" className="ml-[33px]"><path d="M0 0V26L14 13z" fill="#6c6c6c" /></svg>
      </div>
      <div className="flex h-[50px] w-[168px] shrink-0 items-center justify-center bg-[#212121] pb-[2px] font-['Liberation_Sans',sans-serif] text-[25px] text-[#6b6b6b]">RawData</div>
      <div className="flex h-[42px] w-[237px] shrink-0 items-center justify-center rounded-b-[6px] border-x-2 border-b-2 border-[#6a6a6a] bg-white pt-[3px] font-['Liberation_Sans',sans-serif] text-[24px] font-bold tracking-[-0.4px] text-[#3f7e50]">Pivot_Analysis</div>
      <div className="flex h-[42px] w-[77px] shrink-0 items-center justify-center border-r-2 border-[#555] pl-[3px]">
        <svg width="22" height="22" viewBox="0 0 22 22"><path d="M11 0V22M0 11H22" stroke="#a8a8a8" strokeWidth="4" /></svg>
      </div>
    </div>
  )
}

function FieldRow({ name, checked = false }: { name: string; checked?: boolean }) {
  return (
    <div className="flex h-[44px] shrink-0 items-center pl-[16px]">
      <div className={`flex h-[28px] w-[28px] shrink-0 items-center justify-center rounded-[5px] ${checked ? 'bg-[#666]' : 'bg-[#474747]'}`}>
        {checked && <svg width="18" height="18" viewBox="0 0 18 18"><path d="M2 9 7 16 16 2" fill="none" stroke="#f2f2f2" strokeWidth="3.500" /></svg>}
      </div>
      <span className="ml-[12px] text-[26px] text-[#f2f2f2]">{name}</span>
    </div>
  )
}

function AreaHeader({ icon, label, className }: { icon: ReactNode; label: string; className: string }) {
  return (
    <div className="flex h-[32px] items-center">
      {icon}
      <span className={`text-[25.500px] text-[#d4d4d4] ${className}`}>{label}</span>
    </div>
  )
}

function FieldChip({ label }: { label: string }) {
  return (
    <div className="mx-[12px] flex h-[44px] items-center bg-white pl-[14px] font-['Liberation_Sans',sans-serif]">
      <div className="flex flex-col gap-[5px]">
        <div className="h-[6px] w-[6px] rounded-full bg-[#bdbdbd]" />
        <div className="h-[6px] w-[6px] rounded-full bg-[#bdbdbd]" />
      </div>
      <span className="ml-[11px] whitespace-nowrap text-[23px] text-[#4a4a4a]">{label}</span>
      <div className="ml-auto mr-[4px] flex h-[24px] w-[24px] shrink-0 items-center justify-center rounded-full bg-[#c2c2c2] font-['Liberation_Serif',serif] text-[21px] font-bold italic leading-none text-white">i</div>
    </div>
  )
}

function PivotPanel() {
  return (
    <div className="flex w-[600px] shrink-0 flex-col bg-[#323232] px-[12px]">
      <div className="flex h-[56px] shrink-0 items-center justify-between pl-[21px] pr-[20px]">
        <span className="text-[29px] font-medium text-[#e4e4e4]">PivotTable Fields</span>
        <div className="flex h-[28px] w-[28px] items-center justify-center rounded-full bg-[#9a9a9a]">
          <svg width="12" height="12" viewBox="0 0 12 12"><path d="M1 1 11 11M11 1 1 11" stroke="#2a2a2a" strokeWidth="2" /></svg>
        </div>
      </div>
      <div className="mt-[43px] flex h-[32px] shrink-0 items-center pl-[17px]">
        <span className="text-[26px] font-bold text-[#5e5e5e]">FIELD NAME</span>
        <div className="ml-auto flex h-[32px] w-[278px] items-center rounded-[7px] border border-[#5a5a5a] bg-[#3a3a3a] pl-[14px]">
          <Magnifier size={21} color="#e0e0e0" />
          <span className="ml-[16px] text-[22px] text-[#6e6e6e]">Search fields</span>
        </div>
      </div>
      <div className="mt-[38px] flex h-[234px] shrink-0 flex-col overflow-hidden bg-[#222220]">
        <FieldRow name="OrderID" checked />
        <FieldRow name="OrderDate" />
        <FieldRow name="Category" />
        <FieldRow name="Product" />
        <FieldRow name="Country" />
        <FieldRow name="Sales" />
      </div>
      <div className="mt-[19px] flex h-[12px] shrink-0 justify-center">
        <div className="h-[12px] w-[12px] rounded-full bg-[#484848]" />
      </div>
      <div className="mt-[21px] flex shrink-0 gap-[34px]">
        <div className="flex w-[272px] flex-col gap-[16px]">
          <AreaHeader label="Filters" className="ml-[20px] mt-[2px]" icon={
            <svg width="30" height="32" viewBox="0 0 30 32" className="ml-[7px] shrink-0">
              <ellipse cx="15" cy="5" rx="14" ry="5" fill="#8c8c8c" stroke="#8c8c8c" />
              <ellipse cx="15" cy="4.500" rx="9" ry="2.500" fill="#4d4d4d" />
              <path d="M2 8 12 18v13a3 3 0 0 0 6 0V18L28 8z" fill="#8c8c8c" />
            </svg>
          } />
          <div className="h-[387px] bg-[#222220]" />
        </div>
        <div className="flex w-[270px] flex-col gap-[16px]">
          <AreaHeader label="Columns" className="ml-[21px] mt-[2px]" icon={
            <svg width="28" height="28" viewBox="0 0 28 28" className="ml-[7px] shrink-0"><path d="M0 2h7v24H0zM10.500 2h7v24h-7zM21 2h7v24h-7z" fill="#a0a0a0" /></svg>
          } />
          <div className="h-[387px] bg-[#222220]" />
        </div>
      </div>
      <div className="mt-[33px] flex shrink-0 gap-[32px]">
        <div className="flex w-[272px] flex-col gap-[19px]">
          <AreaHeader label="Rows" className="ml-[24px]" icon={
            <svg width="22" height="28" viewBox="0 0 22 28" className="ml-[11px] shrink-0"><path d="M0 1h22v7H0zM0 11h22v7H0zM0 20h22v7H0z" fill="#a0a0a0" /></svg>
          } />
          <div className="h-[387px] bg-[#222220]">
            <FieldChip label="SaleAmount" />
          </div>
        </div>
        <div className="flex w-[272px] flex-col gap-[19px]">
          <AreaHeader label="Values" className="ml-[19px]" icon={
            <svg width="28" height="30" viewBox="0 0 28 30" className="ml-[10px] shrink-0"><path d="M1 1h26v5H10l8 9-8 9h17v5H1v-4l9-10-9-10z" fill="#8c8c8c" /></svg>
          } />
          <div className="h-[387px] bg-[#222220]">
            <FieldChip label="Count of OrderID" />
          </div>
        </div>
      </div>
      <div className="mt-[17px] text-center text-[25.500px] text-[#5e5e5e]">Drag fields between areas</div>
    </div>
  )
}

function StatusBar() {
  return (
    <div className="flex h-[54px] items-center bg-[#292929] text-[24px] text-[#e2e2e2]">
      <span className="ml-[49px] w-[68px] whitespace-nowrap">Ready</span>
      <svg width="30" height="34" viewBox="0 0 30 34" className="ml-[45px] shrink-0">
        <circle cx="14" cy="4" r="3" fill="none" stroke="#eee" strokeWidth="2" />
        <path d="M2 3c2 5 6 7 8 7v10c0 5-1 8-3 12M26 3c-2 5-6 7-8 7v5" fill="none" stroke="#eee" strokeWidth="2" />
        <circle cx="21" cy="24" r="9" fill="#fff" />
        <path d="M21 18v7M21 27v2.500" stroke="#222" strokeWidth="2.400" />
      </svg>
      <span className="ml-[13px] whitespace-nowrap">Accessibility: Investigate</span>
      <div className="ml-auto flex h-[44px] w-[62px] items-center justify-center rounded-[6px] bg-[#636363]">
        <svg width="28" height="28" viewBox="0 0 28 28"><path d="M4 0h5v8H0V4a4 4 0 0 1 4-4zM11 0h6v8h-6zM19 0h5a4 4 0 0 1 4 4v4h-9zM0 10h9v8H0zM11 10h6v8h-6zM19 10h9v8h-9zM0 20h9v8H4a4 4 0 0 1-4-4zM11 20h6v8h-6zM19 20h9v4a4 4 0 0 1-4 4h-5z" fill="#fff" /></svg>
      </div>
      <svg width="24" height="32" viewBox="0 0 24 32" className="ml-[30px] shrink-0">
        <path d="M3 1h11l9 9v19a2 2 0 0 1-2 2H3a2 2 0 0 1-2-2V3a2 2 0 0 1 2-2zM14 1v9h9" fill="none" stroke="#eee" strokeWidth="2" />
        <path d="M5 16h14v10H5zM5 21h14M11 16v10" fill="none" stroke="#eee" strokeWidth="2" />
      </svg>
      <svg width="30" height="32" viewBox="0 0 30 32" className="ml-[45px] shrink-0">
        <path d="M4 0v10h22V0M4 32V21h22v11" fill="none" stroke="#eee" strokeWidth="2" />
        <path d="M0 15.500h30" stroke="#eee" strokeWidth="2" strokeDasharray="4 2" />
      </svg>
      <div className="ml-[35px] h-[3px] w-[16px] shrink-0 bg-[#e8e8e8]" />
      <div className="relative ml-[13px] h-[10px] w-[201px] shrink-0 rounded-full bg-[#696969]">
        <div className="absolute left-[85px] top-[-11px] h-[32px] w-[32px] rounded-full bg-[#929292]" />
      </div>
      <svg width="16" height="16" viewBox="0 0 16 16" className="ml-[14px] shrink-0"><path d="M8 0V16M0 8H16" stroke="#e8e8e8" strokeWidth="2" /></svg>
      <span className="ml-[34px] mr-[49px] whitespace-nowrap">100%</span>
    </div>
  )
}

function GroupingDialog() {
  return (
    <div className="absolute left-[229px] top-[1202px] z-20 flex h-[381px] w-[462px] flex-col overflow-hidden rounded-[22px] border border-black bg-[#282826] text-[26px] text-[#dcdcdc] shadow-[0_30px_80px_rgba(0,0,0,0.7)] ring-1 ring-inset ring-[#555]">
      <div className="flex h-[56px] shrink-0 items-center justify-center border-b-2 border-black bg-[#373736] pb-[2px] text-[26px] font-bold text-[#b2b2b2]">Grouping</div>
      <div className="flex flex-col pr-[42px] pt-[44px]">
        <div className="flex h-[38px] items-center justify-end">
          <div className="h-[28px] w-[28px] rounded-[5px] bg-[#4b4b4b]" />
          <span className="ml-[27px] mr-[19px] whitespace-nowrap">Starting at:</span>
          <div className="flex h-[38px] w-[170px] items-center border border-b-2 border-[#444] bg-[#333331] pl-[6px]">0</div>
        </div>
        <div className="mt-[24px] flex h-[38px] items-center justify-end">
          <div className="flex h-[28px] w-[28px] items-center justify-center rounded-[5px] bg-[#8a8a8a]">
            <svg width="18" height="18" viewBox="0 0 18 18"><path d="M2 9 7 16 16 2" fill="none" stroke="#1e1e1e" strokeWidth="3" /></svg>
          </div>
          <span className="ml-[27px] mr-[19px] whitespace-nowrap">Ending at:</span>
          <div className="flex h-[38px] w-[170px] items-center border border-b-2 border-[#444] bg-[#333331] pl-[6px]">12000</div>
        </div>
        <div className="mt-[24px] flex h-[38px] items-center justify-end">
          <span className="mr-[19px]">By:</span>
          <div className="flex h-[38px] w-[170px] items-center border-2 border-[#242424] bg-[#333331] pl-[5px] outline-[6px] outline-[#767676]">
            2000<div className="h-[32px] w-[3px] bg-[#767676]" />
          </div>
        </div>
        <div className="mt-[36px] flex justify-end">
          <div className="flex h-[40px] w-[124px] items-center justify-center rounded-[8px] bg-[#5c5c5c] text-[#dedede]">Cancel</div>
          <div className="ml-[24px] mr-[-2px] flex h-[40px] w-[140px] items-center justify-center rounded-[8px] bg-[#8f8f8f] text-[#232323]">OK</div>
        </div>
      </div>
    </div>
  )
}

export default function App() {
  return (
    <div className="relative flex h-[1912px] w-[2940px] flex-col overflow-hidden bg-black font-['Inter',sans-serif]">
      <div className="h-[74px] shrink-0 bg-black" />
      <div className="h-[284px] shrink-0 bg-[#1b1b1b]">
        <QuickAccess />
        <RibbonTabs />
        <Ribbon />
      </div>
      <div className="h-[2px] shrink-0 bg-black" />
      <FormulaBar />
      <div className="h-[5px] shrink-0 bg-[#cfcfcf]" />
      <div className="flex h-[1439px] shrink-0">
        <div className="flex w-[2338px] shrink-0 flex-col overflow-hidden">
          <Sheet />
          <SheetTabs />
        </div>
        <div className="w-[2px] shrink-0 bg-black" />
        <PivotPanel />
      </div>
      <div className="h-[2px] shrink-0 bg-black" />
      <StatusBar />
      <GroupingDialog />
    </div>
  )
}
